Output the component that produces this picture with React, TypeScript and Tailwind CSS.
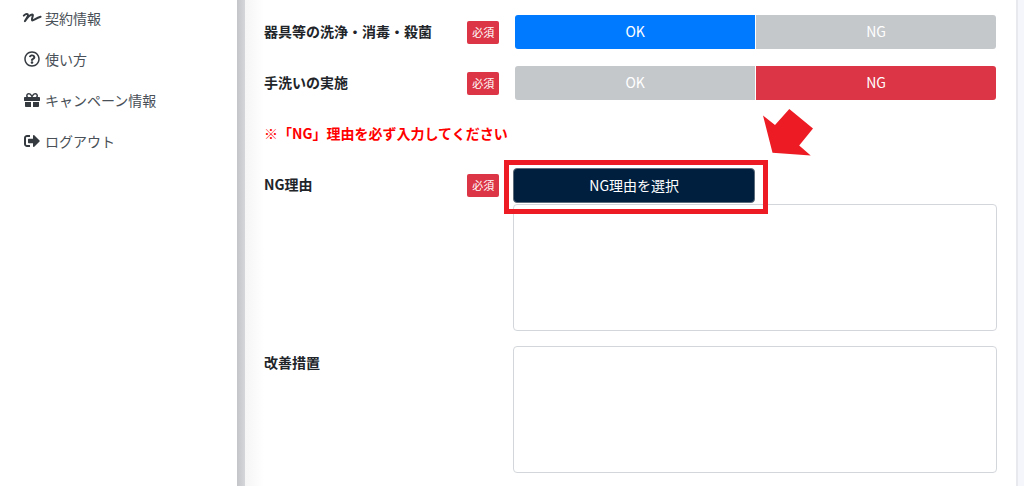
import { useState, type ReactNode } from 'react'
import { FaGift, FaRegQuestionCircle, FaSignOutAlt } from 'react-icons/fa'
import { clsx } from 'clsx'

type Answer = 'ok' | 'ng'

function SignatureIcon({ className }: { className?: string }) {
  return (
    <svg
      className={className}
      viewBox="0 0 20 16"
      fill="none"
      stroke="currentColor"
      strokeWidth="2"
      strokeLinecap="round"
      strokeLinejoin="round"
      aria-hidden="true"
    >
      <path d="M1.8 5.6C3 4.4 5 3.4 5.8 4.3C6.6 5.4 4.2 8.8 2.9 11.2C5 8.2 8 4.6 10.2 4.5C12.2 4.6 9 9.2 10 10.4C11 11.4 13.8 8 18.6 6.8" />
    </svg>
  )
}

const navItems = [
  { label: '契約情報', icon: SignatureIcon, iconClass: 'w-5 h-4' },
  { label: '使い方', icon: FaRegQuestionCircle, iconClass: 'w-4 h-4' },
  { label: 'キャンペーン情報', icon: FaGift, iconClass: 'w-4 h-4' },
  { label: 'ログアウト', icon: FaSignOutAlt, iconClass: 'w-4 h-4' },
]

function Sidebar() {
  return (
    <aside className="w-[237px] shrink-0 bg-white pt-2">
      <nav className="flex flex-col gap-[21px] pl-[22px]">
        {navItems.map(({ label, icon: Icon, iconClass }) => (
          <a key={label} href="#" className="flex items-center gap-[3px] text-sm leading-5 text-[#495057]">
            <span className="flex w-5 justify-center text-[#343a40]">
              <Icon className={iconClass} />
            </span>
            {label}
          </a>
        ))}
      </nav>
    </aside>
  )
}

interface FieldRowProps {
  label: string
  htmlFor?: string
  required?: boolean
  children: ReactNode
}

function FieldRow({ label, htmlFor, required, children }: FieldRowProps) {
  return (
    <div className="grid grid-cols-[34%_1fr] items-start">
      <div className="flex h-[34px] items-center justify-between pr-[14px]">
        <label htmlFor={htmlFor} className="pb-0.5 font-bold">{label}</label>
        {required && (
          <span className="rounded-xs bg-[#dc3545] px-[5px] text-[11px] leading-[23px] text-white">必須</span>
        )}
      </div>
      <div>{children}</div>
    </div>
  )
}

interface AnswerToggleProps {
  label: string
  value: Answer
  onChange: (value: Answer) => void
}

function AnswerToggle({ label, value, onChange }: AnswerToggleProps) {
  return (
    <div role="group" aria-label={label} className="grid grid-cols-2 gap-px pl-[2px] pr-px">
      <button
        type="button"
        aria-pressed={value === 'ok'}
        onClick={() => onChange('ok')}
        className={clsx('h-[34px] rounded-l-[3px] pb-0.5 text-white', value === 'ok' ? 'bg-[#007bff]' : 'bg-[#c4c8cb]')}
      >
        OK
      </button>
      <button
        type="button"
        aria-pressed={value === 'ng'}
        onClick={() => onChange('ng')}
        className={clsx('h-[34px] rounded-r-[3px] pb-0.5 text-white', value === 'ng' ? 'bg-[#dc3545]' : 'bg-[#c4c8cb]')}
      >
        NG
      </button>
    </div>
  )
}

const textareaClass = 'block h-[127px] w-full resize-none rounded-[4px] border border-[#d3d7dc] bg-white px-3 py-2 outline-none'

export default function App() {
  const [cleaning, setCleaning] = useState<Answer>('ok')
  const [handWash, setHandWash] = useState<Answer>('ng')

  return (
    <div className="flex min-h-screen bg-[#f4f6fb] font-['Noto_Sans_CJK_JP',sans-serif] text-sm text-[#212529]">
      <Sidebar />
      {/* Sidebar shadow */}
      <div className="w-2 shrink-0 bg-linear-to-r from-[#c3c5c8] to-[#d5d6da]" />

      <main className="mr-[6px] flex min-w-0 flex-1 border-r-2 border-[#e8e9ee] bg-white">
        <div className="w-[19px] shrink-0 bg-linear-to-r from-[#f5f5f5] to-white" />
        <form className="min-w-0 flex-1 pt-[15px] pr-[19px] pb-[14px]" onSubmit={e => e.preventDefault()}>
          <div className="flex flex-col gap-[17px]">
            <FieldRow label="器具等の洗浄・消毒・殺菌" required>
              <AnswerToggle label="器具等の洗浄・消毒・殺菌" value={cleaning} onChange={setCleaning} />
            </FieldRow>
            <FieldRow label="手洗いの実施" required>
              <AnswerToggle label="手洗いの実施" value={handWash} onChange={setHandWash} />
            </FieldRow>

            <p className="pb-0.5 font-bold leading-8 text-[#ff0000]">※「NG」理由を必ず入力してください</p>

            <FieldRow label="NG理由" htmlFor="ng-reason" required>
              <div className="relative mb-px w-1/2">
                <button type="button" className="h-[35px] w-full rounded-[4px] border border-[#5c6b7a] bg-[#001f3f] pb-0.5 text-white">
                  NG理由を選択
                </button>
                {/* Callout frame and arrow */}
                <div className="pointer-events-none absolute -top-2 -right-[13px] -bottom-[11px] -left-[9px] border-5 border-[#ed1c24]" />
                <svg
                  className="pointer-events-none absolute -top-[59px] left-full ml-2 h-[47px] w-[50px]"
                  viewBox="0 0 50 47"
                  fill="#ed1c24"
                  aria-hidden="true"
                >
                  <path d="M0 6.5 12 16 26.3 0 50 19.5 36.2 36.5 47.7 46.6 9.5 43.7Z" />
                </svg>
              </div>
              <textarea id="ng-reason" className={textareaClass} />
            </FieldRow>
          </div>

          <div className="mt-[15px]">
            <FieldRow label="改善措置" htmlFor="improvement">
              <textarea id="improvement" className={textareaClass} />
            </FieldRow>
          </div>
        </form>
      </main>
    </div>
  )
}
